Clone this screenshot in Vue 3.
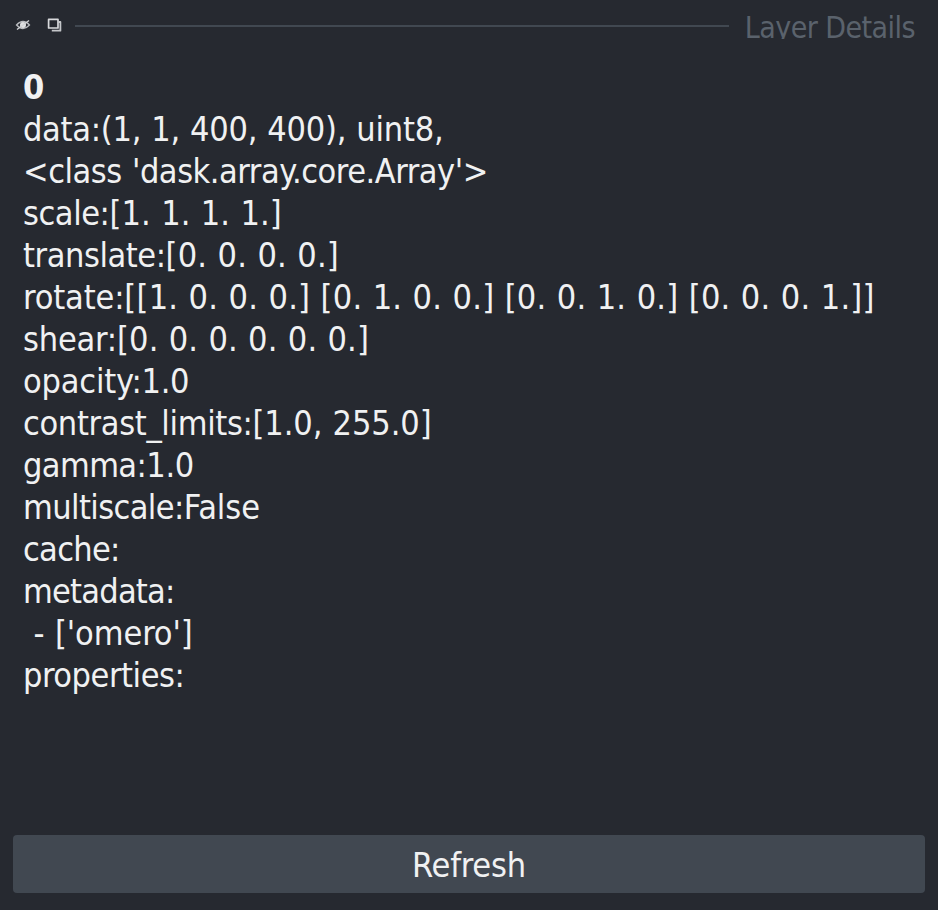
<script setup>
// [key, value, key tracking, value tracking, word spacing], spacings in px
const lines = [
  ['data:', '(1, 1, 400, 400), uint8,', -0.3, -0.2, 0.5],
  ['', "<class 'dask.array.core.Array'>", 0, -0.47, 1],
  ['scale:', '[1. 1. 1. 1.]', -0.45, 0.12, 0.4],
  ['translate:', '[0. 0. 0. 0.]', -0.45, 0.2, 0.4],
  ['rotate:', '[[1. 0. 0. 0.] [0. 1. 0. 0.] [0. 0. 1. 0.] [0. 0. 0. 1.]]', -0.15, 0.22, 0.4],
  ['shear:', '[0. 0. 0. 0. 0. 0.]', -0.2, 0.15, 0.35],
  ['opacity:', '1.0', -0.2, -0.3, 0],
  ['contrast_limits:', '[1.0, 255.0]', -0.34, -0.1, 0.7],
  ['gamma:', '1.0', -0.6, -0.3, 0],
  ['multiscale:', 'False', -0.6, -0.05, 0],
  ['cache:', '', -0.7, 0, 0],
  ['metadata:', '', -0.78, 0, 0],
  ['', " - ['omero']", 0, -0.1, 0.9],
  ['properties:', '', -0.45, 0, 0],
]
</script>

<template>
  <main class="panel">
    <header class="titlebar">
      <svg class="eye" viewBox="0 0 16 14"><path d="M1.5 7Q8 0 14.5 7Q8 14 1.5 7Z" fill="none" stroke="#b9bbbf" stroke-width="1.3"/><circle cx="8" cy="7" r="3" fill="#e0e1e3"/><path d="M2 11.5L14 2.5" stroke="#d2d4d7" stroke-width="1.4"/></svg>
      <svg class="float" viewBox="0 0 16 14"><path d="M1.6 1.4h9.4v8.6H1.6z" fill="none" stroke="#d8d9dc" stroke-width="1.7" stroke-linejoin="round"/><path d="M4.8 12.7h8.6V4h-2.4" fill="none" stroke="#c4c6c9" stroke-width="1.8" stroke-linejoin="round"/></svg>
      <span class="rule"></span>
      <span class="title">Layer Details</span>
    </header>
    <section class="details">
      <strong>0</strong>
      <div v-for="(line, i) in lines" :key="i"><span :style="{ letterSpacing: line[2] + 'px' }">{{ line[0] }}</span><span :style="{ letterSpacing: line[3] + 'px', wordSpacing: line[4] + 'px' }">{{ line[1] }}</span></div>
    </section>
    <button>Refresh</button>
  </main>
</template>

<style>
body { margin: 0; background: #262930; }
</style>
<style scoped>
.panel { box-sizing: border-box; height: 910px; display: flex; flex-direction: column; background: #262930; color: #f0f1f2; font-family: "DejaVu Sans Condensed", "DejaVu Sans", sans-serif; font-stretch: condensed; font-size: 34px; padding: 0 13px 17px; }
.titlebar { height: 52px; display: flex; align-items: center; }
.eye, .float { width: 16px; height: 14px; margin: -2px 0 0 2px; }
.float { margin-left: 16px; }
.rule { height: 2px; flex: 1; margin: 0 16px 0 12px; background: #414851; }
.title { font-size: 30px; letter-spacing: -0.55px; line-height: 36px; height: 29px; overflow: hidden; color: #5a626c; margin: -3px 10px 0 0; }
.details { padding: 14px 10px; flex: 1; line-height: 42px; white-space: pre; }
.details strong { display: block; }
button { height: 58px; border: 0; border-radius: 4px; background: #414851; color: #f0f1f2; font: inherit; letter-spacing: -0.2px; padding: 2px 0 0; }
</style>
